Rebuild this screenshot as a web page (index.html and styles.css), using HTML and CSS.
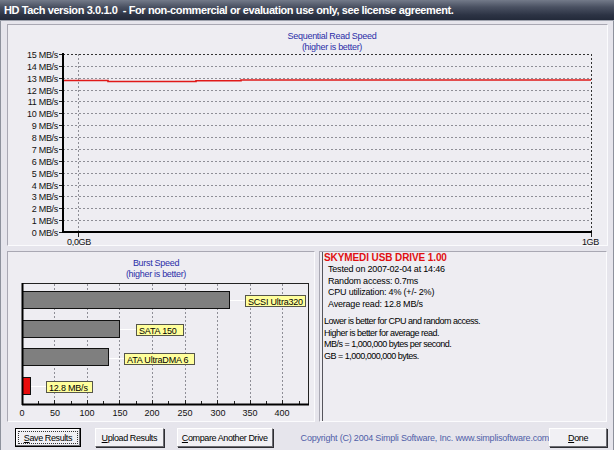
FILE: index.html
```html
<!DOCTYPE html>
<html>
<head>
<meta charset="utf-8">
<link rel="stylesheet" href="styles.css">
</head>
<body>
<div class="window">
  <div class="titlebar">HD Tach version 3.0.1.0&nbsp; - For non-commercial or evaluation use only, see license agreement.</div>
  <div class="content">
    <div class="panel top-panel">
      <svg class="chart" width="602" height="222" viewBox="6 25 602 222">
        <text class="ctitle" x="331" y="40" text-anchor="middle">Sequential Read Speed</text>
        <text class="ctitle" x="331" y="51" text-anchor="middle">(higher is better)</text>
        <g class="grid">
          <line x1="62" y1="67.5" x2="590" y2="67.5"/>
          <line x1="62" y1="79.5" x2="590" y2="79.5"/>
          <line x1="62" y1="91.5" x2="590" y2="91.5"/>
          <line x1="62" y1="102.5" x2="590" y2="102.5"/>
          <line x1="62" y1="114.5" x2="590" y2="114.5"/>
          <line x1="62" y1="126.5" x2="590" y2="126.5"/>
          <line x1="62" y1="138.5" x2="590" y2="138.5"/>
          <line x1="62" y1="150.5" x2="590" y2="150.5"/>
          <line x1="62" y1="162.5" x2="590" y2="162.5"/>
          <line x1="62" y1="174.5" x2="590" y2="174.5"/>
          <line x1="62" y1="186.5" x2="590" y2="186.5"/>
          <line x1="62" y1="197.5" x2="590" y2="197.5"/>
          <line x1="62" y1="209.5" x2="590" y2="209.5"/>
          <line x1="62" y1="221.5" x2="590" y2="221.5"/>
          <line x1="77.5" y1="55" x2="77.5" y2="233"/>
        </g>
        <g class="frame-dash">
          <line x1="62" y1="55.5" x2="590" y2="55.5"/>
          <line x1="590.5" y1="55" x2="590.5" y2="233"/>
        </g>
        <g class="ticks">
          <line x1="58" y1="55.5" x2="62" y2="55.5"/>
          <line x1="58" y1="67.5" x2="62" y2="67.5"/>
          <line x1="58" y1="79.5" x2="62" y2="79.5"/>
          <line x1="58" y1="91.5" x2="62" y2="91.5"/>
          <line x1="58" y1="102.5" x2="62" y2="102.5"/>
          <line x1="58" y1="114.5" x2="62" y2="114.5"/>
          <line x1="58" y1="126.5" x2="62" y2="126.5"/>
          <line x1="58" y1="138.5" x2="62" y2="138.5"/>
          <line x1="58" y1="150.5" x2="62" y2="150.5"/>
          <line x1="58" y1="162.5" x2="62" y2="162.5"/>
          <line x1="58" y1="174.5" x2="62" y2="174.5"/>
          <line x1="58" y1="186.5" x2="62" y2="186.5"/>
          <line x1="58" y1="197.5" x2="62" y2="197.5"/>
          <line x1="58" y1="209.5" x2="62" y2="209.5"/>
          <line x1="58" y1="221.5" x2="62" y2="221.5"/>
          <line x1="58" y1="233.5" x2="62" y2="233.5"/>
          <line x1="77.5" y1="233" x2="77.5" y2="238"/>
          <line x1="590.5" y1="233" x2="590.5" y2="238"/>
        </g>
        <g class="ylabels">
          <text x="57" y="59">15 MB/s</text>
          <text x="57" y="71">14 MB/s</text>
          <text x="57" y="83">13 MB/s</text>
          <text x="57" y="95">12 MB/s</text>
          <text x="57" y="106">11 MB/s</text>
          <text x="57" y="118">10 MB/s</text>
          <text x="57" y="130">9 MB/s</text>
          <text x="57" y="142">8 MB/s</text>
          <text x="57" y="154">7 MB/s</text>
          <text x="57" y="166">6 MB/s</text>
          <text x="57" y="178">5 MB/s</text>
          <text x="57" y="190">4 MB/s</text>
          <text x="57" y="201">3 MB/s</text>
          <text x="57" y="213">2 MB/s</text>
          <text x="57" y="225">1 MB/s</text>
          <text x="57" y="237">0 MB/s</text>
        </g>
        <polyline class="read" points="62,81.5 107,81.5 107,82.5 195,82.5 195,81.8 240,81.8 240,81 590,81"/>
        <line class="axis" x1="62" y1="54" x2="62" y2="234"/>
        <line class="axis" x1="61" y1="233" x2="591" y2="233"/>
        <text class="xlabel" x="66" y="246">0,0GB</text>
        <text class="xlabel" x="598" y="246" text-anchor="end">1GB</text>
      </svg>
    </div>
    <div class="row">
      <div class="panel burst-panel">
        <svg class="chart" width="308" height="171" viewBox="6 252 308 171">
          <text class="ctitle" x="155" y="267" text-anchor="middle">Burst Speed</text>
          <text class="ctitle" x="155" y="278" text-anchor="middle">(higher is better)</text>
          <g class="grid">
            <line x1="53.5" y1="285" x2="53.5" y2="405"/>
            <line x1="86.5" y1="285" x2="86.5" y2="405"/>
            <line x1="118.5" y1="285" x2="118.5" y2="405"/>
            <line x1="151.5" y1="285" x2="151.5" y2="405"/>
            <line x1="184.5" y1="285" x2="184.5" y2="405"/>
            <line x1="216.5" y1="285" x2="216.5" y2="405"/>
            <line x1="249.5" y1="285" x2="249.5" y2="405"/>
            <line x1="281.5" y1="285" x2="281.5" y2="405"/>
          </g>
          <g class="minor">
            <line x1="37.5" y1="402" x2="37.5" y2="405"/>
            <line x1="53.5" y1="401" x2="53.5" y2="405"/>
            <line x1="70.5" y1="402" x2="70.5" y2="405"/>
            <line x1="86.5" y1="401" x2="86.5" y2="405"/>
            <line x1="102.5" y1="402" x2="102.5" y2="405"/>
            <line x1="118.5" y1="401" x2="118.5" y2="405"/>
            <line x1="135.5" y1="402" x2="135.5" y2="405"/>
            <line x1="151.5" y1="401" x2="151.5" y2="405"/>
            <line x1="167.5" y1="402" x2="167.5" y2="405"/>
            <line x1="184.5" y1="401" x2="184.5" y2="405"/>
            <line x1="200.5" y1="402" x2="200.5" y2="405"/>
            <line x1="216.5" y1="401" x2="216.5" y2="405"/>
            <line x1="233.5" y1="402" x2="233.5" y2="405"/>
            <line x1="249.5" y1="401" x2="249.5" y2="405"/>
            <line x1="265.5" y1="402" x2="265.5" y2="405"/>
            <line x1="281.5" y1="401" x2="281.5" y2="405"/>
            <line x1="298.5" y1="402" x2="298.5" y2="405"/>
          </g>
          <rect class="plotframe" x="21.5" y="284.5" width="286" height="121"/>
          <g class="connectors">
            <line x1="229" y1="301.5" x2="244" y2="301.5"/>
            <line x1="119" y1="330.5" x2="135" y2="330.5"/>
            <line x1="108" y1="359.5" x2="123" y2="359.5"/>
            <line x1="30" y1="387.5" x2="45" y2="387.5"/>
          </g>
          <rect class="bar" x="21.5" y="292.5" width="207" height="17"/>
          <rect class="bar" x="21.5" y="321.5" width="97" height="17"/>
          <rect class="bar" x="21.5" y="349.5" width="86" height="17"/>
          <rect class="bar red" x="21.5" y="378.5" width="8" height="17"/>
          <g class="tags">
            <rect x="244.5" y="296.5" width="60" height="11"/>
            <text x="247" y="305.5">SCSI Ultra320</text>
            <rect x="135.5" y="325.5" width="47" height="11"/>
            <text x="138" y="334.5">SATA 150</text>
            <rect x="123.5" y="354.5" width="70" height="11"/>
            <text x="126" y="363.5">ATA UltraDMA 6</text>
            <rect x="45.5" y="382.5" width="46" height="11"/>
            <text x="48" y="391.5">12.8 MB/s</text>
          </g>
          <line class="axis" x1="21.5" y1="284" x2="21.5" y2="406"/>
          <line class="axis" x1="21" y1="405.5" x2="308" y2="405.5"/>
          <g class="xticks">
            <text x="21" y="417">0</text>
            <text x="54" y="417">50</text>
            <text x="86" y="417">100</text>
            <text x="119" y="417">150</text>
            <text x="151" y="417">200</text>
            <text x="184" y="417">250</text>
            <text x="217" y="417">300</text>
            <text x="249" y="417">350</text>
            <text x="281" y="417">400</text>
          </g>
        </svg>
      </div>
      <div class="panel info-panel">
        <div class="info">
          <div class="drive">SKYMEDI USB DRIVE 1.00</div>
          <div class="stat">Tested on 2007-02-04 at 14:46</div>
          <div class="stat">Random access: 0.7ms</div>
          <div class="stat">CPU utilization: 4% (+/- 2%)</div>
          <div class="stat">Average read: 12.8 MB/s</div>
          <div class="notes">
            <div>Lower is better for CPU and random access.</div>
            <div>Higher is better for average read.</div>
            <div>MB/s = 1,000,000 bytes per second.</div>
            <div>GB = 1,000,000,000 bytes.</div>
          </div>
        </div>
      </div>
    </div>
    <div class="buttons">
      <button class="btn btn-save"><span class="focus"><u>S</u>ave Results</span></button>
      <button class="btn btn-upload"><u>U</u>pload Results</button>
      <button class="btn btn-compare"><u>C</u>ompare Another Drive</button>
      <div class="copyright">Copyright (C) 2004 Simpli Software, Inc. www.simplisoftware.com</div>
      <button class="btn btn-done"><u>D</u>one</button>
    </div>
  </div>
</div>
</body>
</html>
```

FILE: styles.css
```css
html, body {
  margin: 0;
  padding: 0;
}
body {
  font-family: "Liberation Sans", Arial, sans-serif;
  font-size: 9px;
  letter-spacing: -0.4px;
  color: #000;
}
.window {
  width: 614px;
  height: 450px;
  background: #e6e5ec;
  overflow: hidden;
}
.titlebar {
  height: 21px;
  box-sizing: border-box;
  padding-left: 4px;
  line-height: 20px;
  color: #fff;
  font-family: "Liberation Sans", Arial, sans-serif;
  font-weight: bold;
  font-size: 11px;
  letter-spacing: -0.4px;
  background: linear-gradient(#737a89 0%, #4a5162 35%, #2c3344 75%, #232a3a 100%);
  border-bottom: 1px solid #9ea2ad;
  white-space: nowrap;
}
.content {
  height: 429px;
  box-sizing: border-box;
  padding: 3px 6px 0 6px;
  display: flex;
  flex-direction: column;
  gap: 5px;
  border-left: 1px solid #8d919c;
  border-right: 1px solid #8d919c;
}
.panel {
  box-sizing: border-box;
  background: #eeedf2;
  border-top: 1px solid #a9a8b3;
  border-left: 1px solid #a9a8b3;
  border-right: 1px solid #fbfbfd;
  border-bottom: 1px solid #fbfbfd;
}
.top-panel {
  height: 222px;
  width: 601px;
}
.chart {
  display: block;
  margin: -1px 0 0 -1px;
  font-family: "Liberation Sans", Arial, sans-serif;
  font-size: 9px;
  letter-spacing: -0.3px;
}
.ctitle {
  fill: #2b2ea8;
}
.grid line {
  stroke: #8e8e96;
  stroke-width: 1;
  stroke-dasharray: 2 2;
}
.frame-dash line {
  stroke: #333;
  stroke-width: 1;
  stroke-dasharray: 2 2;
}
.ticks line, .minor line {
  stroke: #222;
  stroke-width: 1;
}
.ylabels text {
  text-anchor: end;
  fill: #111;
}
.xlabel {
  fill: #111;
}
.read {
  fill: none;
  stroke: #e01818;
  stroke-width: 1.6;
}
.axis {
  stroke: #000;
  stroke-width: 2;
}
.row {
  display: flex;
  gap: 4px;
  height: 171px;
}
.burst-panel {
  width: 308px;
}
.plotframe {
  fill: none;
  stroke: #222;
  stroke-width: 1;
}
.connectors line {
  stroke: #ffffff;
  stroke-width: 1;
}
.bar {
  fill: #7f7f7f;
  stroke: #111;
  stroke-width: 1;
}
.bar.red {
  fill: #e80c0c;
}
.tags rect {
  fill: #ffff9c;
  stroke: #55554a;
  stroke-width: 1;
}
.tags text {
  fill: #000;
  font-size: 9px;
  letter-spacing: -0.2px;
}
.xticks text {
  text-anchor: middle;
  fill: #111;
  letter-spacing: 0;
}
.info-panel {
  flex: 1;
  padding-left: 2px;
}
.info {
  height: 100%;
  box-sizing: border-box;
  border-left: 1px solid #55555c;
  padding: 0 0 0 1px;
  line-height: 11.5px;
}
.drive {
  color: #e01010;
  font-weight: bold;
  font-size: 10px;
  letter-spacing: -0.1px;
  line-height: 12px;
}
.stat {
  padding-left: 4px;
  letter-spacing: -0.2px;
}
.notes {
  margin-top: 6px;
  letter-spacing: -0.5px;
}
.buttons {
  display: flex;
  align-items: center;
  height: 19px;
  margin-top: 1px;
  padding-left: 8px;
}
.btn {
  box-sizing: border-box;
  height: 19px;
  padding: 0;
  margin: 0;
  font-family: "Liberation Sans", Arial, sans-serif;
  font-size: 9px;
  letter-spacing: -0.4px;
  white-space: nowrap;
  color: #000;
  background: #f1f0f4;
  border-top: 1px solid #ffffff;
  border-left: 1px solid #ffffff;
  border-right: 1px solid #6c6c72;
  border-bottom: 1px solid #6c6c72;
  box-shadow: 1px 1px 0 #2e2e33;
}
.btn-save {
  width: 66px;
  border: 1px solid #000;
  box-shadow: inset -1px -1px 0 #6c6c72, inset 1px 1px 0 #fff;
  display: flex;
  padding: 2px;
}
.focus {
  flex: 1;
  border: 1px dotted #333;
  display: flex;
  align-items: center;
  justify-content: center;
}
.btn-upload {
  width: 69px;
  margin-left: 14px;
}
.btn-compare {
  width: 96px;
  margin-left: 13px;
}
.copyright {
  margin-left: 28px;
  color: #4f60a8;
  font-size: 9px;
  letter-spacing: -0.2px;
  white-space: nowrap;
}
.btn-done {
  width: 58px;
  margin-left: auto;
}
```
